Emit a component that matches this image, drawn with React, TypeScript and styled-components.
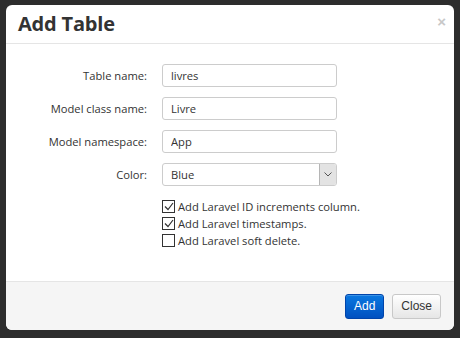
import React from "react";
import styled, { createGlobalStyle } from "styled-components";

const GlobalStyle = createGlobalStyle`
  html, body {
    margin: 0;
    padding: 0;
    background: #2d2d2d;
    height: 100%;
  }
  body {
    font-family: "Open Sans", "DejaVu Sans", sans-serif;
  }
`;

const SPage = styled.div`
  width: 460px;
  height: 338px;
  padding: 5px 0 0 6px;
  box-sizing: border-box;
`;

const SModal = styled.div`
  width: 448px;
  height: 325px;
  background: #fff;
  border-radius: 6px;
  display: flex;
  flex-direction: column;
  overflow: hidden;
`;

const SHeader = styled.div`
  height: 38px;
  border-bottom: 1px solid #e5e5e5;
  display: flex;
  align-items: center;
  justify-content: space-between;
  padding: 0 8px 0 12px;
  box-sizing: content-box;
`;

const STitle = styled.h3`
  margin: 0;
  font-size: 20px;
  font-weight: 700;
  color: #333;
  line-height: 1;
  letter-spacing: -0.2px;
`;

const SClose = styled.span`
  font-family: "Liberation Sans", Arial, sans-serif;
  font-size: 15px;
  font-weight: 700;
  color: #c8c8c8;
  line-height: 1;
  margin-top: -6px;
`;

const SBody = styled.div`
  flex: 1;
  padding: 20px 0 0;
`;

const SRow = styled.div`
  display: flex;
  align-items: center;
  height: 23px;
  margin-bottom: 10px;
`;

const SLabel = styled.label`
  width: 141px;
  text-align: right;
  font-size: 11.2px;
  color: #333;
`;

const SInput = styled.input`
  margin-left: 15px;
  width: 175px;
  height: 23px;
  box-sizing: border-box;
  border: 1px solid #ccc;
  border-radius: 3px;
  padding: 0 8px;
  font-family: "Open Sans", sans-serif;
  font-size: 11.2px;
  color: #333;
  outline: none;
`;

const SSelect = styled.div`
  margin-left: 15px;
  width: 175px;
  height: 23px;
  box-sizing: border-box;
  border: 1px solid #ccc;
  border-radius: 3px;
  display: flex;
  align-items: center;
  justify-content: space-between;
  padding-left: 8px;
  font-size: 11.2px;
  color: #333;
`;

const SArrow = styled.div`
  width: 16px;
  height: 21px;
  background: #e3e3e3;
  border-left: 1px solid #b5b5b5;
  border-radius: 0 2px 2px 0;
  display: flex;
  align-items: center;
  justify-content: center;
`;

const SChecks = styled.div`
  padding-left: 156px;
  padding-top: 4px;
  display: flex;
  flex-direction: column;
  gap: 4px;
`;

const SCheckRow = styled.label`
  display: flex;
  align-items: center;
  gap: 3px;
  font-size: 11.2px;
  color: #333;
  height: 13px;
`;

const SBox = styled.span`
  width: 11px;
  height: 11px;
  border: 1px solid #333;
  display: flex;
  align-items: center;
  justify-content: center;
  background: #fff;
`;

const SFooter = styled.div`
  height: 49px;
  box-sizing: border-box;
  border-top: 1px solid #e5e5e5;
  background: #f5f5f5;
  display: flex;
  justify-content: flex-end;
  align-items: center;
  gap: 8px;
  padding: 0 13px 0 0;
`;

const SButton = styled.button<{ primary?: boolean }>`
  height: 25px;
  padding: 0 8px;
  border-radius: 3px;
  font-family: "Liberation Sans", Arial, sans-serif;
  font-size: 12px;
  border: 1px solid ${({ primary }) => (primary ? "#0044aa" : "#c8c8c8")};
  color: ${({ primary }) => (primary ? "#fff" : "#333")};
  background: ${({ primary }) =>
    primary
      ? "linear-gradient(#0a78e0, #0050c0)"
      : "linear-gradient(#ffffff, #e6e6e6)"};
  box-shadow: inset 0 1px 0 rgba(255, 255, 255, 0.2);
`;

const Check = ({ checked, label }: { checked?: boolean; label: string }) => (
  <SCheckRow>
    <SBox>
      {checked && (
        <svg width="10" height="9" viewBox="0 0 10 9">
          <path d="M1 4.5 L4 7.5 L9 1" fill="none" stroke="#333" strokeWidth="1.2" />
        </svg>
      )}
    </SBox>
    {label}
  </SCheckRow>
);

const App: React.FC = () => (
  <SPage>
    <GlobalStyle />
    <SModal>
      <SHeader>
        <STitle>Add Table</STitle>
        <SClose>×</SClose>
      </SHeader>
      <SBody>
        <SRow>
          <SLabel>Table name:</SLabel>
          <SInput defaultValue="livres" />
        </SRow>
        <SRow>
          <SLabel>Model class name:</SLabel>
          <SInput defaultValue="Livre" />
        </SRow>
        <SRow>
          <SLabel>Model namespace:</SLabel>
          <SInput defaultValue="App" />
        </SRow>
        <SRow>
          <SLabel>Color:</SLabel>
          <SSelect>
            Blue
            <SArrow>
              <svg width="8" height="5" viewBox="0 0 8 5">
                <path d="M0.5 0.5 L4 4 L7.5 0.5" fill="none" stroke="#555" strokeWidth="1" />
              </svg>
            </SArrow>
          </SSelect>
        </SRow>
        <SChecks>
          <Check checked label="Add Laravel ID increments column." />
          <Check checked label="Add Laravel timestamps." />
          <Check label="Add Laravel soft delete." />
        </SChecks>
      </SBody>
      <SFooter>
        <SButton primary>Add</SButton>
        <SButton>Close</SButton>
      </SFooter>
    </SModal>
  </SPage>
);

export default App;
